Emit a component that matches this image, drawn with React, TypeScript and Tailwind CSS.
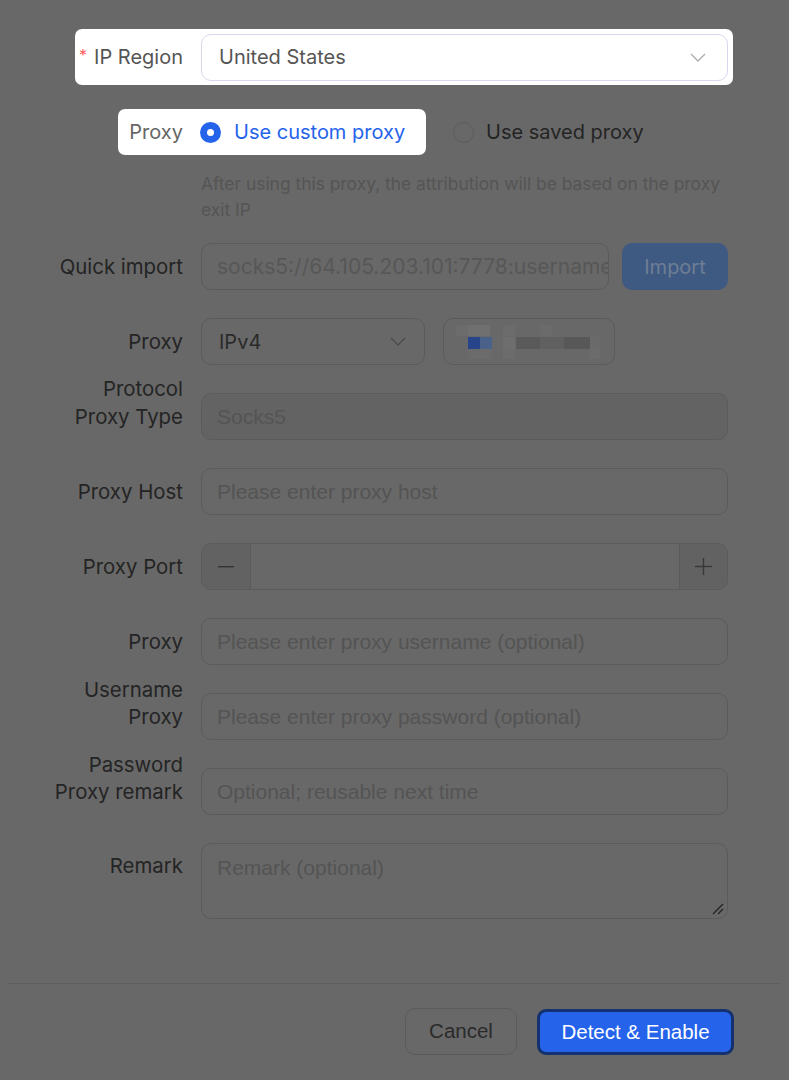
import React from "react";

const LABEL = "text-[20.4px] leading-[28px] text-[#242424] text-right";
const BOX =
  "h-[47px] rounded-[10px] border border-[#5b5b5b] flex items-center";
const PH =
  "font-['Liberation_Sans',Arial,sans-serif] text-[21px] text-[#545454] whitespace-nowrap";

function Chevron({ className }: { className?: string }) {
  return (
    <svg
      width="16"
      height="9"
      viewBox="0 0 16 9"
      fill="none"
      className={className}
    >
      <path
        d="M1 1 L8 8 L15 1"
        stroke="currentColor"
        strokeWidth="1.3"
        strokeLinejoin="round"
      />
    </svg>
  );
}

function Mosaic() {
  const cells: [number, number, number, number, string][] = [
    [12, 6, 12, 11, "#6c6c6c"],
    [24, 6, 22, 11, "#707070"],
    [59, 6, 12, 11, "#6c6c6c"],
    [96, 6, 12, 11, "#6b6b6b"],
    [24, 18, 12, 12, "#27438a"],
    [36, 18, 12, 12, "#4a628a"],
    [59, 18, 12, 12, "#6e6e6e"],
    [72, 18, 24, 12, "#5a5a5a"],
    [96, 18, 24, 12, "#606060"],
    [120, 18, 26, 12, "#585858"],
    [146, 18, 10, 12, "#6a6a6a"],
    [24, 30, 24, 10, "#6b6b6b"],
    [59, 30, 12, 10, "#6c6c6c"],
    [146, 30, 10, 10, "#6c6c6c"],
  ];
  return (
    <svg width="170" height="45" viewBox="0 0 170 45">
      {cells.map(([x, y, w, h, c], i) => (
        <rect key={i} x={x} y={y} width={w} height={h} fill={c} />
      ))}
    </svg>
  );
}

export default function App() {
  return (
    <div className="min-h-[1080px] w-full bg-[#686868] font-['Inter','Noto_Sans',sans-serif] antialiased">
      <div className="pt-[29px]">
        {/* IP Region (highlighted) */}
        <div className="ml-[75px] flex h-[56px] w-[658px] items-center rounded-[7px] bg-white pr-[5px]">
          <div className="flex w-[108px] items-center justify-end">
            <span className="mr-[7px] mt-[-4px] text-[16px] text-[#ff6161]">
              *
            </span>
            <span className="text-[20px] text-[#555555]">IP Region</span>
          </div>
          <div className="ml-[18px] flex h-[47px] flex-1 items-center justify-between rounded-[10px] border border-[#d7d7ee] pl-[17px] pr-[21px]">
            <span className="text-[20px] text-[#555555]">United States</span>
            <Chevron className="text-[#ababab]" />
          </div>
        </div>

        {/* Proxy radios */}
        <div className="mt-[24px] flex h-[46px] items-center">
          <div className="ml-[118px] flex h-[46px] w-[308px] items-center rounded-[7px] bg-white">
            <span className="w-[65px] text-right text-[20px] text-[#666666]">
              Proxy
            </span>
            <span className="ml-[17px] flex h-[21px] w-[21px] items-center justify-center rounded-full bg-[#2563eb]">
              <span className="h-[7px] w-[7px] rounded-full bg-white" />
            </span>
            <span className="ml-[13px] text-[20px] text-[#2563eb]">
              Use custom proxy
            </span>
          </div>
          <span className="ml-[27px] h-[21px] w-[21px] rounded-full border border-[#5c5c5c]" />
          <span className="ml-[12px] text-[20px] text-[#242424]">
            Use saved proxy
          </span>
        </div>

        {/* help text */}
        <div className="ml-[201px] mt-[16px] text-[17.4px] leading-[26px] text-[#555555]">
          <div className="whitespace-nowrap">
            After using this proxy, the attribution will be based on the proxy
          </div>
          <div>exit IP</div>
        </div>

        {/* form rows */}
        <div className="mt-[20px] flex flex-col gap-[28px]">
          {/* Quick import */}
          <div className="flex h-[47px] items-center">
            <div className={`w-[183px] ${LABEL}`}>Quick import</div>
            <div
              className={`ml-[18px] w-[408px] overflow-hidden pl-[15px] ${BOX}`}
            >
              <span className="whitespace-nowrap text-[21px] text-[#575757]">
                socks5://64.105.203.101:7778:username
              </span>
            </div>
            <div className="ml-[13px] flex h-[47px] w-[106px] items-center justify-center rounded-[10px] bg-[#3e5a82] text-[20px] text-[#6e7e95]">
              Import
            </div>
          </div>

          {/* Proxy IPv4 */}
          <div className="flex h-[47px] items-center">
            <div className={`w-[183px] ${LABEL}`}>Proxy</div>
            <div
              className={`ml-[18px] w-[224px] justify-between pl-[17px] pr-[18px] ${BOX}`}
            >
              <span className="text-[20px] text-[#2a2a2a]">IPv4</span>
              <Chevron className="text-[#4a4a4a]" />
            </div>
            <div
              className={`ml-[18px] w-[172px] overflow-hidden ${BOX} items-start`}
            >
              <Mosaic />
            </div>
          </div>

          {/* Protocol Proxy Type */}
          <div className="flex h-[47px] items-start">
            <div className={`mt-[-18px] w-[183px] ${LABEL}`}>
              <div>Protocol</div>
              <div>Proxy Type</div>
            </div>
            <div
              className={`ml-[18px] w-[527px] bg-[#636363] pl-[15px] ${BOX}`}
            >
              <span className={PH}>Socks5</span>
            </div>
          </div>

          {/* Proxy Host */}
          <div className="flex h-[47px] items-center">
            <div className={`w-[183px] ${LABEL}`}>Proxy Host</div>
            <div className={`ml-[18px] w-[527px] pl-[15px] ${BOX}`}>
              <span className={PH}>Please enter proxy host</span>
            </div>
          </div>

          {/* Proxy Port */}
          <div className="flex h-[47px] items-center">
            <div className={`w-[183px] ${LABEL}`}>Proxy Port</div>
            <div
              className={`ml-[18px] w-[527px] overflow-hidden items-stretch ${BOX}`}
            >
              <div className="flex w-[49px] items-center justify-center border-r border-[#5b5b5b] bg-[#626262]">
                <svg width="16" height="2" viewBox="0 0 16 2">
                  <rect x="0" y="0" width="16" height="1.4" fill="#333333" />
                </svg>
              </div>
              <div className="flex-1" />
              <div className="flex w-[48px] items-center justify-center border-l border-[#5b5b5b] bg-[#626262]">
                <svg width="17" height="17" viewBox="0 0 17 17">
                  <rect x="0" y="7.8" width="17" height="1.4" fill="#383838" />
                  <rect x="7.8" y="0" width="1.4" height="17" fill="#383838" />
                </svg>
              </div>
            </div>
          </div>

          {/* Proxy Username */}
          <div className="flex h-[47px] items-start">
            <div className="h-[47px] w-[183px] text-right text-[20.4px] leading-[48px] text-[#242424]">
              <div>Proxy</div>
              <div>Username</div>
            </div>
            <div className={`ml-[18px] w-[527px] pl-[15px] ${BOX}`}>
              <span className={PH}>Please enter proxy username (optional)</span>
            </div>
          </div>

          {/* Proxy Password */}
          <div className="flex h-[47px] items-start">
            <div className="h-[47px] w-[183px] text-right text-[20.4px] leading-[48px] text-[#242424]">
              <div>Proxy</div>
              <div>Password</div>
            </div>
            <div className={`ml-[18px] w-[527px] pl-[15px] ${BOX}`}>
              <span className={PH}>Please enter proxy password (optional)</span>
            </div>
          </div>

          {/* Proxy remark */}
          <div className="flex h-[47px] items-center">
            <div className={`w-[183px] ${LABEL}`}>Proxy remark</div>
            <div className={`ml-[18px] w-[527px] pl-[15px] ${BOX}`}>
              <span className={PH}>Optional; reusable next time</span>
            </div>
          </div>

          {/* Remark */}
          <div className="flex h-[76px] items-start">
            <div className="flex h-[47px] w-[183px] items-center justify-end text-[20.4px] text-[#242424]">
              Remark
            </div>
            <div className="relative ml-[18px] h-[76px] w-[527px] rounded-[10px] border border-[#5b5b5b] pl-[15px] pt-[8px]">
              <span className={PH}>Remark (optional)</span>
              <svg
                width="12"
                height="12"
                viewBox="0 0 12 12"
                className="absolute bottom-[3px] right-[3px]"
              >
                <path d="M1 11 L11 1" stroke="#222" strokeWidth="1.3" />
                <path d="M6 11 L11 6" stroke="#222" strokeWidth="1.3" />
              </svg>
            </div>
          </div>
        </div>

        {/* footer */}
        <div className="mx-[8px] mt-[64px] border-t border-[#5e5e5e]" />
        <div className="flex items-start justify-end gap-[20px] pr-[55px] pt-[24px] font-['Liberation_Sans',Arial,sans-serif]">
          <div className="flex h-[47px] w-[112px] items-center justify-center rounded-[10px] border border-[#5b5b5b] text-[20.5px] text-[#2a2a2a]">
            Cancel
          </div>
          <div className="mt-[1px] flex h-[46px] w-[197px] items-center justify-center rounded-[9px] border-[3px] border-[#14306e] bg-[#2563eb] text-[20.5px] text-white">
            Detect &amp; Enable
          </div>
        </div>
      </div>
    </div>
  );
}
